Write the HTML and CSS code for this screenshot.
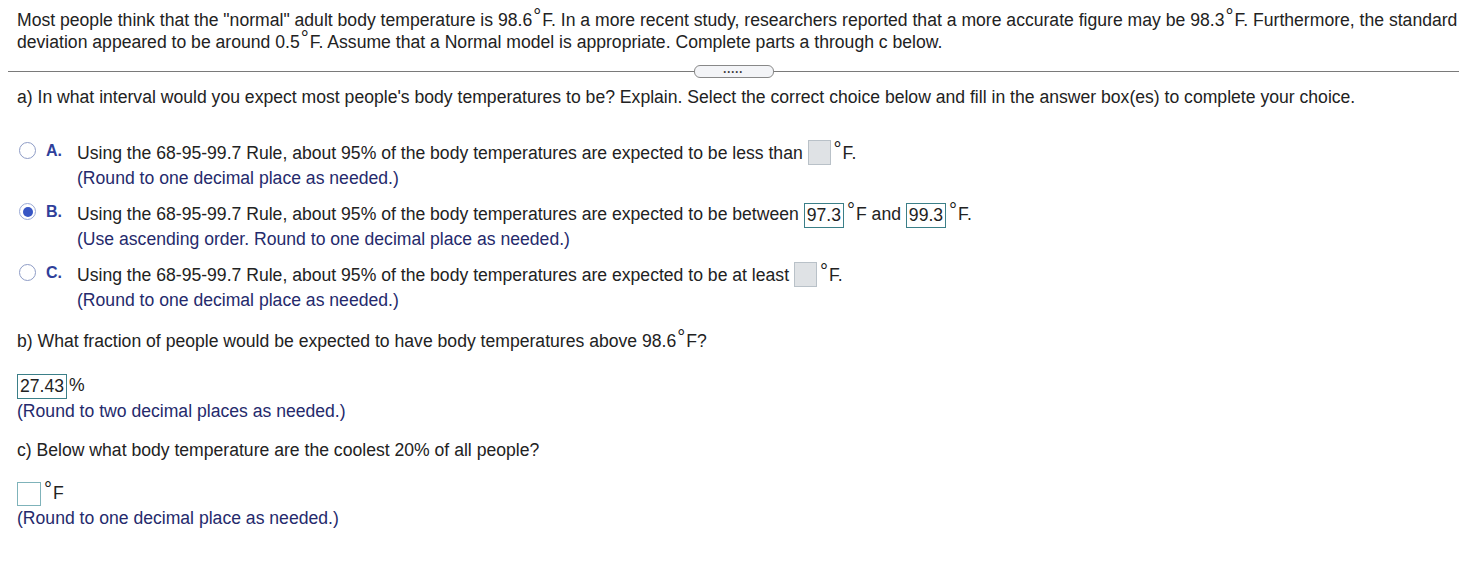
FILE: index.html
```html
<!DOCTYPE html>
<html>
<head>
<meta charset="utf-8">
<link rel="stylesheet" href="styles.css">
</head>
<body>
<div class="intro">Most people think that the "normal" adult body temperature is 98.6<span class="deg">°</span>F. In a more recent study, researchers reported that a more accurate figure may be 98.3<span class="deg">°</span>F. Furthermore, the standard<br>deviation appeared to be around 0.5<span class="deg">°</span>F. Assume that a Normal model is appropriate. Complete parts a through c below.</div>

<div class="divider">
  <div class="line"></div>
  <div class="pill"><span class="dots">•••••</span></div>
  <div class="line"></div>
</div>

<div class="question qa">a) In what interval would you expect most people's body temperatures to be? Explain. Select the correct choice below and fill in the answer box(es) to complete your choice.</div>

<div class="options">
  <div class="option">
    <span class="radio"></span>
    <span class="letter">A.</span>
    <div class="body">
      <div class="main">Using the 68-95-99.7 Rule, about 95% of the body temperatures are expected to be less than <span class="box empty"></span><span class="deg">°</span>F.</div>
      <div class="hint">(Round to one decimal place as needed.)</div>
    </div>
  </div>
  <div class="option">
    <span class="radio checked"></span>
    <span class="letter">B.</span>
    <div class="body">
      <div class="main">Using the 68-95-99.7 Rule, about 95% of the body temperatures are expected to be between <span class="box filled">97.3</span><span class="deg">°</span>F and <span class="box filled">99.3</span><span class="deg">°</span>F.</div>
      <div class="hint">(Use ascending order. Round to one decimal place as needed.)</div>
    </div>
  </div>
  <div class="option">
    <span class="radio"></span>
    <span class="letter">C.</span>
    <div class="body">
      <div class="main">Using the 68-95-99.7 Rule, about 95% of the body temperatures are expected to be at least <span class="box empty"></span><span class="deg">°</span>F.</div>
      <div class="hint">(Round to one decimal place as needed.)</div>
    </div>
  </div>
</div>

<div class="question qb">b) What fraction of people would be expected to have body temperatures above 98.6<span class="deg">°</span>F?</div>
<div class="answer ab"><span class="box filled wide">27.43</span>%</div>
<div class="hint plain">(Round to two decimal places as needed.)</div>

<div class="question qc">c) Below what body temperature are the coolest 20% of all people?</div>
<div class="answer ac"><span class="box blank"></span><span class="deg">°</span>F</div>
<div class="hint plain">(Round to one decimal place as needed.)</div>
</body>
</html>
```
FILE: styles.css
```css
body {
  margin: 0;
  font-family: "Liberation Sans", Arial, sans-serif;
  font-size: 17.6px;
  color: #222;
  background: #fff;
}
.deg {
  font-size: 20px;
  vertical-align: 3px;
  line-height: 0;
  margin: 0 1px 0 1px;
}
.intro {
  padding: 9px 0 0 17px;
  line-height: 22px;
  white-space: nowrap;
}
.divider {
  display: flex;
  align-items: center;
  margin: 12px 0 0 8px;
  height: 13px;
}
.line {
  flex: 1;
  height: 1px;
  background: #7a7a7a;
}
.pill {
  width: 78px;
  height: 11px;
  border: 1px solid #888;
  border-radius: 6px;
  background: #f3f4f7;
  display: flex;
  align-items: center;
  justify-content: center;
}
.dots {
  font-size: 7px;
  letter-spacing: 1.5px;
  color: #333;
  line-height: 1;
}
.question {
  padding-left: 17px;
  line-height: 22px;
}
.qa { margin-top: 8px; }
.options { margin-top: 34px; }
.option {
  display: flex;
  padding-left: 19px;
  margin-bottom: 14px;
}
.radio {
  width: 15px;
  height: 15px;
  border: 1px solid #8e9cc6;
  border-radius: 50%;
  margin-top: 0px;
  flex: none;
  box-sizing: content-box;
  display: flex;
  align-items: center;
  justify-content: center;
}
.radio.checked {
  border-color: #9aa9d6;
}
.radio.checked::after {
  content: "";
  width: 10px;
  height: 10px;
  border-radius: 50%;
  background: #3755c4;
}
.letter {
  width: 31px;
  margin-left: 10px;
  font-weight: bold;
  font-size: 16px;
  color: #2f3f9a;
  line-height: 17px;
  flex: none;
}
.main {
  line-height: 24px;
  height: 24px;
  margin-top: -1px;
}
.hint {
  color: #252a6c;
  line-height: 22px;
  margin-top: 2px;
}
.box {
  display: inline-block;
  box-sizing: border-box;
  vertical-align: middle;
  height: 25px;
  line-height: 23px;
  padding: 0 2px;
  margin-left: 0px;
  margin-right: 2px;
}
.box.empty {
  width: 23px;
  background: #dfe2e5;
  border: 1px solid #b9c1c8;
  margin-top: -3px;
}
.box.filled {
  border: 1px solid #3b7f88;
  background: #fff;
  color: #222;
}
.box.blank {
  width: 24px;
  height: 24px;
  border: 1px solid #7fb3ba;
  background: #fff;
}
.qb { margin-top: 19px; }
.answer {
  padding-left: 17px;
  line-height: 24px;
  height: 24px;
}
.ab { margin-top: 21px; margin-bottom: 3px; }
.ac { margin-top: 20px; margin-bottom: 2px; }
.hint.plain {
  padding-left: 17px;
  margin-top: 0;
}
.qc { margin-top: 17px; }
```
